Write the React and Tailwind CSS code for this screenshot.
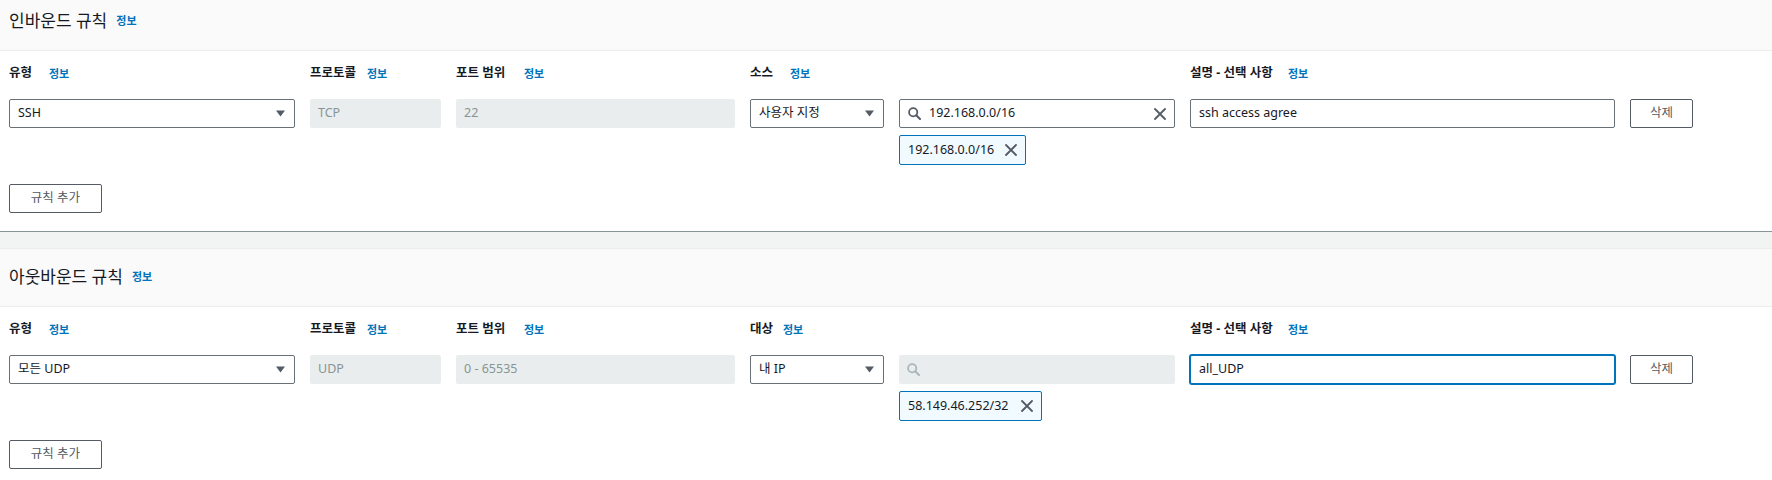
import React from "react";

const Caret = () => (
  <svg width="9" height="7" viewBox="0 0 9 7" className="shrink-0">
    <path d="M0 0.5 L9 0.5 L4.5 6.5 Z" fill="#545b64" />
  </svg>
);

const SearchIcon = ({ color = "#545b64" }) => (
  <svg width="13" height="13" viewBox="0 0 13 13" className="shrink-0">
    <circle cx="5.2" cy="5.2" r="4.1" fill="none" stroke={color} strokeWidth="1.8" />
    <path d="M8.2 8.2 L12 12" stroke={color} strokeWidth="2" strokeLinecap="round" />
  </svg>
);

const XIcon = () => (
  <svg width="12" height="12" viewBox="0 0 12 12" className="shrink-0">
    <path d="M1 1 L11 11 M11 1 L1 11" stroke="#545b64" strokeWidth="1.8" strokeLinecap="round" />
  </svg>
);

const Info = () => (
  <span className="text-[11px] font-bold text-[#0073bb]">정보</span>
);

const Label = ({ text, w }) => (
  <div className="h-[18px] flex items-center text-[12.5px] font-bold text-[#16191f] whitespace-nowrap">
    <span className={w}>{text}</span>
    <Info />
  </div>
);

const Select = ({ value }) => (
  <div className="h-[29px] flex items-center justify-between border border-[#687078] rounded-[2px] bg-white pl-[8px] pr-[9px] text-[#16191f]">
    <span>{value}</span>
    <Caret />
  </div>
);

const Disabled = ({ value }) => (
  <div className="h-[29px] flex items-center rounded-[2px] bg-[#eaeded] pl-[8px] text-[#879596]">
    {value}
  </div>
);

const Button = ({ children }) => (
  <div className="h-[29px] flex items-center justify-center border border-[#545b64] rounded-[2px] bg-white text-[#545b64]">
    {children}
  </div>
);

const Token = ({ value, w }) => (
  <div
    className={`${w} h-[30px] mt-[7px] flex items-center justify-between border border-[#0073bb] rounded-[2px] bg-[#f1faff] pl-[8px] pr-[8px] text-[#16191f]`}
  >
    <span>{value}</span>
    <XIcon />
  </div>
);

const Header = ({ title, top }) => (
  <div className={`bg-[#fafafa] border-b border-[#eaeded] px-[9px] ${top} pb-[19px]`}>
    <div className="h-[22px] flex items-center">
      <span className="text-[17px] text-[#16191f]">{title}</span>
      <span className="ml-[9px] flex items-center">
        <Info />
      </span>
    </div>
  </div>
);

const Section = ({ title, top, type, protocol, port, srcLabel, srcW, srcValue, search, token, tokenW, desc, focused }) => (
  <div>
    <Header title={title} top={top} />
    <div className="px-[9px] pt-[13px] pb-[18px]">
      <div className="grid grid-cols-[286px_131px_279px_134px_276px_425px_63px] gap-x-[15px]">
        <Label text="유형" w="w-[40px]" />
        <Label text="프로토콜" w="w-[57px]" />
        <Label text="포트 범위" w="w-[68px]" />
        <Label text={srcLabel} w={srcW} />
        <div />
        <Label text="설명 - 선택 사항" w="w-[98px]" />
        <div />

        <div className="mt-[17px]"><Select value={type} /></div>
        <div className="mt-[17px]"><Disabled value={protocol} /></div>
        <div className="mt-[17px]"><Disabled value={port} /></div>
        <div className="mt-[17px]"><Select value={srcValue} /></div>
        <div className="mt-[17px]">
          {search ? (
            <div className="h-[29px] flex items-center border border-[#687078] rounded-[2px] bg-white pl-[8px] pr-[8px] text-[#16191f]">
              <SearchIcon />
              <span className="ml-[8px] flex-1">{search}</span>
              <XIcon />
            </div>
          ) : (
            <div className="h-[29px] flex items-center rounded-[2px] bg-[#eaeded] pl-[8px]">
              <SearchIcon color="#aab7b8" />
            </div>
          )}
        </div>
        <div className="mt-[17px]">
          {focused ? (
            <div className="h-[29px] flex items-center border border-[#0073bb] shadow-[0_0_0_1px_#0073bb] rounded-[2px] bg-white pl-[8px] text-[#16191f]">
              {desc}
            </div>
          ) : (
            <div className="h-[29px] flex items-center border border-[#687078] rounded-[2px] bg-white pl-[8px] text-[#16191f]">
              {desc}
            </div>
          )}
        </div>
        <div className="mt-[17px]"><Button>삭제</Button></div>

        <div className="col-start-5">
          <Token value={token} w={tokenW} />
        </div>
      </div>
      <div className="mt-[19px] w-[93px]">
        <Button>규칙 추가</Button>
      </div>
    </div>
  </div>
);

export default function App() {
  return (
    <div className="w-[1772px] h-[480px] overflow-hidden bg-white font-['Noto_Sans','Noto_Sans_CJK_KR',sans-serif] text-[12.5px] leading-none">
      <Section
        title="인바운드 규칙"
        top="pt-[9px]"
        type="SSH"
        protocol="TCP"
        port="22"
        srcLabel="소스"
        srcW="w-[40px]"
        srcValue="사용자 지정"
        search="192.168.0.0/16"
        token="192.168.0.0/16"
        tokenW="w-[127px]"
        desc="ssh access agree"
      />
      <div className="border-t border-[#879596] bg-[#f2f3f3] h-[18px] border-b border-b-[#eaeded]" />
      <Section
        title="아웃바운드 규칙"
        top="pt-[16px]"
        type="모든 UDP"
        protocol="UDP"
        port="0 - 65535"
        srcLabel="대상"
        srcW="w-[33px]"
        srcValue="내 IP"
        search={null}
        token="58.149.46.252/32"
        tokenW="w-[143px]"
        desc="all_UDP"
        focused
      />
    </div>
  );
}
